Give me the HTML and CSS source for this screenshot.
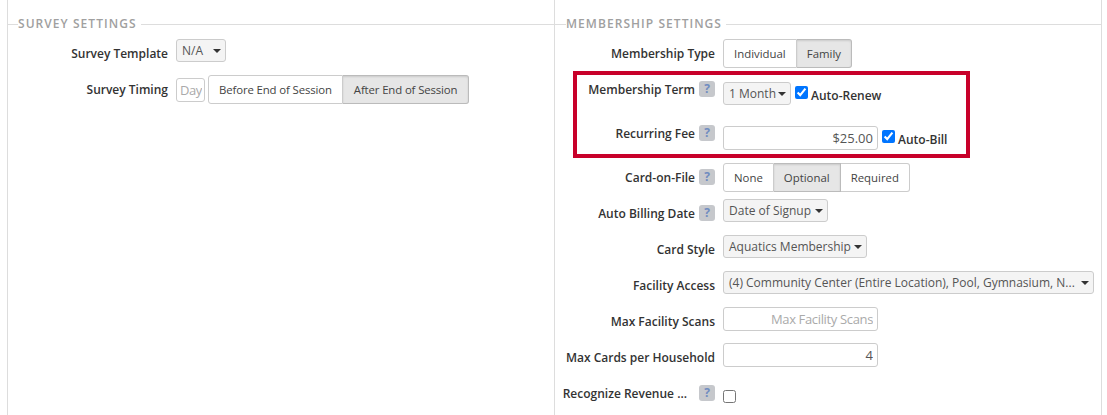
FILE: index.html
```html
<!DOCTYPE html>
<html lang="en">
  <head>
    <meta charset="UTF-8" />
    <meta name="viewport" content="width=device-width, initial-scale=1.0" />
    <title>Settings</title>
    <link rel="stylesheet" href="styles.css">
  </head>
  <body>
    <div class="settings">
      <section class="panel panel-survey">
        <div class="legend"><span>SURVEY SETTINGS</span></div>
        <div class="row">
          <label class="row-label">Survey Template</label>
          <div class="select select-na">N/A <i class="caret"></i></div>
        </div>
        <div class="row">
          <label class="row-label">Survey Timing</label>
          <input class="input input-day" type="text" placeholder="Day" />
          <div class="btn-group">
            <button class="btn">Before End of Session</button>
            <button class="btn active">After End of Session</button>
          </div>
        </div>
      </section>

      <section class="panel panel-membership">
        <div class="legend"><span>MEMBERSHIP SETTINGS</span></div>
        <div class="row row-type">
          <label class="row-label">Membership Type</label>
          <div class="btn-group">
            <button class="btn">Individual</button>
            <button class="btn active">Family</button>
          </div>
        </div>
        <div class="row row-term">
          <label class="row-label">Membership Term <b class="help">?</b></label>
          <div class="select select-term">1 Month <i class="caret"></i></div>
          <label class="check"><input type="checkbox" checked />Auto-Renew</label>
        </div>
        <div class="row row-fee">
          <label class="row-label">Recurring Fee <b class="help">?</b></label>
          <input class="input input-fee" type="text" value="$25.00" />
          <label class="check"><input type="checkbox" checked />Auto-Bill</label>
        </div>
        <div class="row">
          <label class="row-label">Card-on-File <b class="help">?</b></label>
          <div class="btn-group">
            <button class="btn">None</button>
            <button class="btn active">Optional</button>
            <button class="btn">Required</button>
          </div>
        </div>
        <div class="row">
          <label class="row-label">Auto Billing Date <b class="help">?</b></label>
          <div class="select select-date">Date of Signup <i class="caret"></i></div>
        </div>
        <div class="row">
          <label class="row-label">Card Style</label>
          <div class="select select-style">Aquatics Membership <i class="caret"></i></div>
        </div>
        <div class="row">
          <label class="row-label">Facility Access</label>
          <div class="select select-full">(4) Community Center (Entire Location), Pool, Gymnasium, N... <i class="caret"></i></div>
        </div>
        <div class="row">
          <label class="row-label">Max Facility Scans</label>
          <input class="input input-num" type="text" placeholder="Max Facility Scans" />
        </div>
        <div class="row">
          <label class="row-label">Max Cards per Household</label>
          <input class="input input-num" type="text" value="4" />
        </div>
        <div class="row row-revenue">
          <label class="row-label"><span class="truncated">Recognize Revenue ...</span> <b class="help">?</b></label>
          <input class="plain-check" type="checkbox" />
        </div>
        <div class="highlight"></div>
      </section>
    </div>
  </body>
</html>
```

FILE: styles.css
```css
* {
  box-sizing: border-box;
}

html,
body {
  height: 100%;
}

body {
  margin: 0;
  overflow: hidden;
  background-color: #fff;
  color: #333;
  font-family: "Open Sans", sans-serif;
  font-size: 12px;
}

.settings {
  display: flex;
  height: 415px;
  margin-left: 7px;
  margin-right: 5px;
  border-left: 1px solid #ddd;
  border-right: 1px solid #ddd;
}

.panel {
  position: relative;
  padding-top: 16px;
}

.panel-survey {
  width: 547px;
  border-right: 1px solid #ddd;
}

.panel-membership {
  flex: 1;
}

.legend {
  height: 23px;
  padding-left: 11px;
  background: linear-gradient(#ddd, #ddd) 0 8px / 100% 1px no-repeat;
  color: #a0a0a0;
  font-size: 12px;
  font-weight: 600;
  letter-spacing: 1.05px;
  line-height: 16px;
}

.legend span {
  padding: 0 4px 0 0;
  background-color: #fff;
}

.panel-survey .legend {
  padding-left: 10px;
}

.row {
  display: flex;
  align-items: flex-start;
  height: 36px;
}

.row-type {
  height: 43px;
}

.row-term {
  height: 44px;
}

.row-fee {
  height: 37px;
}

.row-label {
  display: flex;
  align-items: center;
  justify-content: flex-end;
  height: 24px;
  margin-top: 2px;
  margin-right: 8px;
  color: #333;
  font-weight: 600;
  white-space: nowrap;
}

.row-term .row-label,
.row-fee .row-label {
  margin-top: -5px;
}

.panel-survey .row-label {
  width: 160px;
}

.panel-membership .row-label {
  width: 160px;
}

.help {
  flex: none;
  width: 16px;
  height: 16px;
  margin-left: 4px;
  border-radius: 3px;
  background-color: #c6c8cc;
  color: #6f8cc0;
  font-size: 12px;
  font-weight: 700;
  line-height: 16px;
  text-align: center;
}

.truncated {
  margin-right: 8px;
}

.select {
  display: flex;
  align-items: center;
  justify-content: space-between;
  height: 23px;
  padding: 0 4px 0 5px;
  border: 1px solid #ccc;
  border-radius: 3px;
  background-color: #f4f4f4;
  color: #555;
  white-space: nowrap;
}

.select-na {
  width: 50px;
}

.select-term {
  width: 68px;
}

.select-date {
  width: 105px;
}

.select-style {
  width: 144px;
}

.select-full {
  width: 371px;
}

.caret {
  width: 0;
  height: 0;
  border-top: 4px solid #333;
  border-left: 4px solid transparent;
  border-right: 4px solid transparent;
}

.input {
  height: 24px;
  padding: 0 4px 0 3px;
  border: 1px solid #ccc;
  border-radius: 3px;
  background-color: #fff;
  color: #555;
  font-family: inherit;
  font-size: 13px;
  text-align: right;
}

.input::placeholder {
  color: #aaa;
  letter-spacing: -0.35px;
  opacity: 1;
}

.input-day {
  width: 29px;
  margin-top: 3px;
  margin-right: 3px;
  padding: 0 2px;
}

.input-fee {
  width: 155px;
}

.input-num {
  width: 155px;
}

.btn-group {
  display: flex;
}

.btn {
  height: 29px;
  padding: 0 10px;
  border: 1px solid #ccc;
  border-left-width: 0;
  background-color: #fff;
  color: #444;
  font-family: inherit;
  font-size: 11.4px;
}

.panel-survey .btn {
  letter-spacing: -0.13px;
}

.panel-survey .btn.active {
  padding: 0 11px;
}

.btn:first-child {
  border-left-width: 1px;
  border-radius: 3px 0 0 3px;
}

.btn:last-child {
  border-radius: 0 3px 3px 0;
}

.btn.active {
  border-color: #bbb;
  background-color: #e6e6e6;
  box-shadow: inset 0 1px 2px rgba(0, 0, 0, 0.12);
}

.check {
  display: flex;
  align-items: center;
  height: 24px;
  margin-top: 1px;
  margin-left: 4px;
  font-weight: 600;
}

.check input {
  width: 13px;
  height: 13px;
  margin: 0 3px 6px 0;
}

.plain-check {
  width: 13px;
  height: 13px;
  margin: 11px 0 0;
}

/* red annotation drawn over the two recurring rows */
.highlight {
  position: absolute;
  top: 71px;
  left: 18px;
  width: 397px;
  height: 87px;
  border: 4px solid #c8002a;
  pointer-events: none;
}
```
